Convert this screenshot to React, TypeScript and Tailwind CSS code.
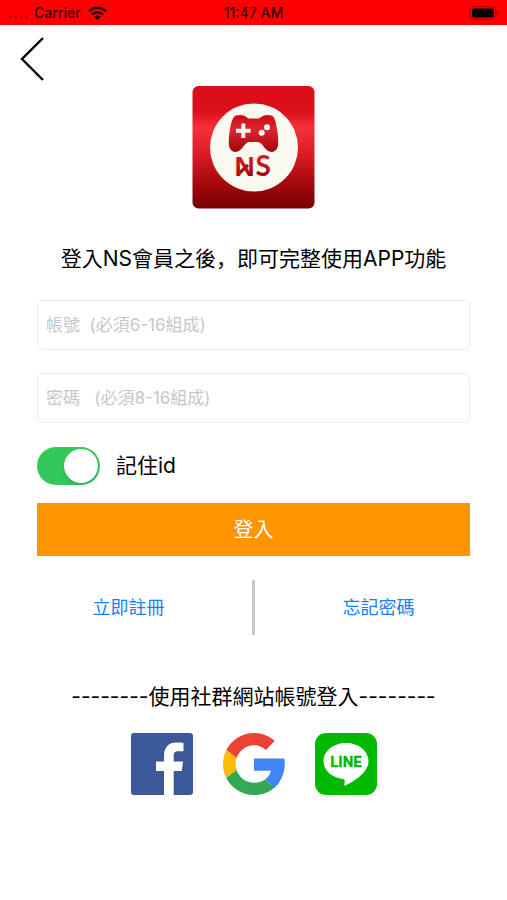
import type { ReactNode } from "react";

function StatusBar() {
  return (
    <header className="grid h-[25px] grid-cols-3 items-center bg-[#ff0000] px-2 text-[14px] leading-5 font-medium text-[#3a0000]">
      <div className="flex items-center gap-[5px]">
        <svg className="mt-2 h-1 w-[21px]" viewBox="0 0 21 4" fill="#b80000" aria-hidden="true">
          <circle cx="2" cy="2" r="1.3" />
          <circle cx="7.5" cy="2" r="1.3" />
          <circle cx="13" cy="2" r="1.3" />
          <circle cx="18.5" cy="2" r="1.3" />
        </svg>
        <span>Carrier</span>
        <svg className="ml-[2px] h-[14px] w-[19px]" viewBox="0 0 19 14" fill="none" stroke="#240000" strokeWidth="2.6" aria-hidden="true">
          <path d="M1 5.200C5.800.600 13.200.600 18 5.200" />
          <path d="M4 8.500c3.200-3 7.800-3 11 0" />
          <path d="M6.200 10.700c1.800-1.700 4.800-1.700 6.600 0l-3.300 3.300z" fill="#240000" stroke="none" />
        </svg>
      </div>
      <span className="text-center">11:47 AM</span>
      <svg className="h-[14px] w-[30px] justify-self-end" viewBox="0 0 30 14" aria-hidden="true">
        <rect x="1.200" y=".7" width="25.600" height="12.600" rx="3.500" fill="none" stroke="#a00000" />
        <rect x="3" y="2.500" width="22" height="9" rx="2" fill="#000" />
        <path d="M28.200 4.800c2 .8 2 3.600 0 4.400z" fill="#a00000" />
      </svg>
    </header>
  );
}

function AppLogo() {
  return (
    <svg className="mx-auto size-[123px]" viewBox="0 0 123 123" role="img" aria-label="NS">
      <defs>
        <linearGradient id="tile" x1="0" y1="0" x2="0" y2="1">
          <stop offset="0" stopColor="#dc0d18" />
          <stop offset=".2" stopColor="#da0f1a" />
          <stop offset=".34" stopColor="#f4303c" />
          <stop offset=".55" stopColor="#dc1d27" />
          <stop offset=".78" stopColor="#a80a0e" />
          <stop offset="1" stopColor="#780000" />
        </linearGradient>
        <linearGradient id="pad" x1="0" y1="0" x2="0" y2="1">
          <stop offset="0" stopColor="#cc0d17" />
          <stop offset=".4" stopColor="#dd2530" />
          <stop offset="1" stopColor="#a00609" />
        </linearGradient>
        <linearGradient id="letters" gradientUnits="userSpaceOnUse" x1="0" y1="70" x2="0" y2="90">
          <stop offset="0" stopColor="#cf1c26" />
          <stop offset=".5" stopColor="#c4141d" />
          <stop offset="1" stopColor="#9c080c" />
        </linearGradient>
      </defs>
      <rect x=".5" width="122" height="122.500" rx="6" fill="url(#tile)" />
      <circle cx="62" cy="61.500" r="44" fill="#fbfaf1" />
      <path
        d="M44 29.600c4.500-1.400 8.500-.6 11 1.900.8.800 1.800 1.100 3 1.100h7.500c1.200 0 2.200-.3 3-1.100 2.500-2.500 6.500-3.300 11-1.900 3.800 1.300 4.700 8.400 6 17 .9 6.500 1.300 12.700-.5 16-1.800 3.500-6 4.600-9.500 2-3.500-2.700-5-6.600-8-8.100-1-.5-2-.6-3.500-.6h-5c-1.500 0-2.500.1-3.500.6-3 1.500-4.500 5.400-8 8.100-3.500 2.600-7.700 1.500-9.500-2-1.800-3.300-1.400-9.500-.5-16 1.300-8.600 2.700-15.700 6.500-17z"
        fill="url(#pad)"
      />
      <path d="M51.300 37.500v14.500M44 44.700h14.600" stroke="#fbfaf1" strokeWidth="4" />
      <circle cx="75" cy="41.300" r="3" fill="#fbfaf1" />
      <circle cx="69.700" cy="46.700" r="3" fill="#fbfaf1" />
      <g fill="url(#letters)" fontSize="28" fontWeight="700">
        <text x="42.500" y="89.500" fontFamily="Liberation Sans, sans-serif">N</text>
        <text x="63.500" y="89.500" fontFamily="Lato, sans-serif">S</text>
      </g>
      <path d="M46 88.500l10-9.500" stroke="#ae0e14" strokeWidth="3.200" />
    </svg>
  );
}

function FacebookIcon() {
  return (
    <svg className="size-full" viewBox="0 0 62 62" aria-hidden="true">
      <rect width="62" height="62" rx="3" fill="#3b5998" />
      <path d="M33 62V38h-8v-9.500h8v-6C33 14 38 9.500 45.500 9.500c3.500 0 6 .2 7 .4v8.400h-5c-4 0-4.800 2-4.800 4.700v5.500h9.300L50.800 38h-8.100v24z" fill="#fff" />
    </svg>
  );
}

function GoogleIcon() {
  return (
    <svg className="size-full" viewBox="0 0 48 48" aria-hidden="true">
      <path fill="#EA4335" d="M24 9.500c3.540 0 6.710 1.220 9.210 3.600l6.850-6.850C35.900 2.380 30.470 0 24 0 14.620 0 6.510 5.380 2.560 13.220l7.980 6.190C12.430 13.720 17.740 9.500 24 9.500z" />
      <path fill="#4285F4" d="M47.500 19.700H24v9.600h13.100c-.6 2.800-2.200 5.100-4.800 6.900l7.590 6.300c4.500-4.200 7.600-10.300 7.900-17.950.1-1.700 0-3.300-.29-4.850z" />
      <path fill="#FBBC05" d="M10.530 28.590c-.48-1.450-.76-2.990-.76-4.590s.27-3.140.76-4.590l-7.980-6.190C.92 16.460 0 20.120 0 24c0 3.880.92 7.540 2.560 10.780l7.970-6.190z" />
      <path fill="#34A853" d="M24 48c6.480 0 11.930-2.130 15.890-5.810l-7.730-6c-2.150 1.450-4.920 2.300-8.160 2.300-6.260 0-11.570-4.220-13.470-9.910l-7.980 6.190C6.510 42.620 14.620 48 24 48z" />
    </svg>
  );
}

function LineIcon() {
  return (
    <svg className="size-full" viewBox="0 0 62 62" aria-hidden="true">
      <rect width="62" height="62" rx="11" fill="#00b900" />
      <path d="M31 10C18.500 10 8.500 18 8.500 28c0 9.500 8.500 16.700 19.500 18 2 .4 2 1.700 1.300 5.700-.1.900.5 1.100 1.300.7C36.500 49.500 53.500 40.500 53.500 28 53.500 18 43.500 10 31 10z" fill="#fff" />
      <text x="31" y="33.500" textAnchor="middle" fill="#00b900" stroke="#00b900" strokeWidth=".3" fontFamily="Roboto, sans-serif" fontSize="15" fontWeight="700">
        LINE
      </text>
    </svg>
  );
}

function TextField({ label, type, hint }: { label: string; type: string; hint: string }) {
  return (
    <input
      type={type}
      aria-label={label}
      placeholder={hint}
      className="block h-[50px] w-full rounded-md border border-[#ececec] bg-white px-2 text-[17px] leading-6 text-black outline-none placeholder:text-[#c7c7c9]"
    />
  );
}

function SocialButton({ label, children }: { label: string; children: ReactNode }) {
  return (
    <button type="button" aria-label={label} className="size-[62px]">
      {children}
    </button>
  );
}

export default function App() {
  return (
    <div className="min-h-screen bg-white font-['Inter','Noto_Sans_CJK_TC',sans-serif] text-black">
      <StatusBar />
      <nav className="h-[61px] px-4 pt-2">
        <button type="button" aria-label="返回" className="flex h-[52px] w-8 items-center justify-center">
          <svg className="h-[44px] w-6" viewBox="0 0 24 44" fill="none" stroke="#000" strokeWidth="2.400">
            <path d="M23 1L2 22l21 21" />
          </svg>
        </button>
      </nav>
      <main className="px-[37px]">
        <AppLogo />
        <h1 className="mt-8 text-center text-[21px] leading-8 font-normal whitespace-nowrap">
          登入NS會員之後<span className="font-['Noto_Sans_CJK_SC',sans-serif]">，</span>即可完整使用APP功能
        </h1>
        <form className="mt-[25px]" onSubmit={(e) => e.preventDefault()}>
          <div className="flex flex-col gap-[23px]">
            <TextField label="帳號" type="text" hint="帳號  (必須6-16組成)" />
            <TextField label="密碼" type="password" hint="密碼   (必須8-16組成)" />
          </div>
          <label className="mt-6 flex w-fit items-center gap-4 text-[21px] leading-8">
            <input
              type="checkbox"
              role="switch"
              defaultChecked
              className="flex h-[38px] w-[63px] appearance-none items-center rounded-full bg-[#d8d8d8] p-[2px] before:size-[34px] before:rounded-full before:bg-white before:shadow-md checked:justify-end checked:bg-[#34c759]"
            />
            記住id
          </label>
          <button type="submit" className="mt-[18px] h-[53px] w-full bg-[#ff9500] text-[20px] leading-8 text-white">
            登入
          </button>
        </form>
        <div className="mt-6 flex h-[55px] items-center text-center text-[18px] leading-7 text-[#147efb]">
          <div className="flex-1 pr-8">
            <a href="#register">立即註冊</a>
          </div>
          <div className="h-full w-[3px] bg-[#c8c8c8]" />
          <div className="flex-1 pl-8">
            <a href="#forgot">忘記密碼</a>
          </div>
        </div>
        <p className="mt-[46px] text-center text-[21px] leading-8 whitespace-nowrap">--------使用社群網站帳號登入--------</p>
        <div className="mt-5 flex justify-center gap-[30px]">
          <SocialButton label="Facebook">
            <FacebookIcon />
          </SocialButton>
          <SocialButton label="Google">
            <GoogleIcon />
          </SocialButton>
          <SocialButton label="LINE">
            <LineIcon />
          </SocialButton>
        </div>
      </main>
    </div>
  );
}
